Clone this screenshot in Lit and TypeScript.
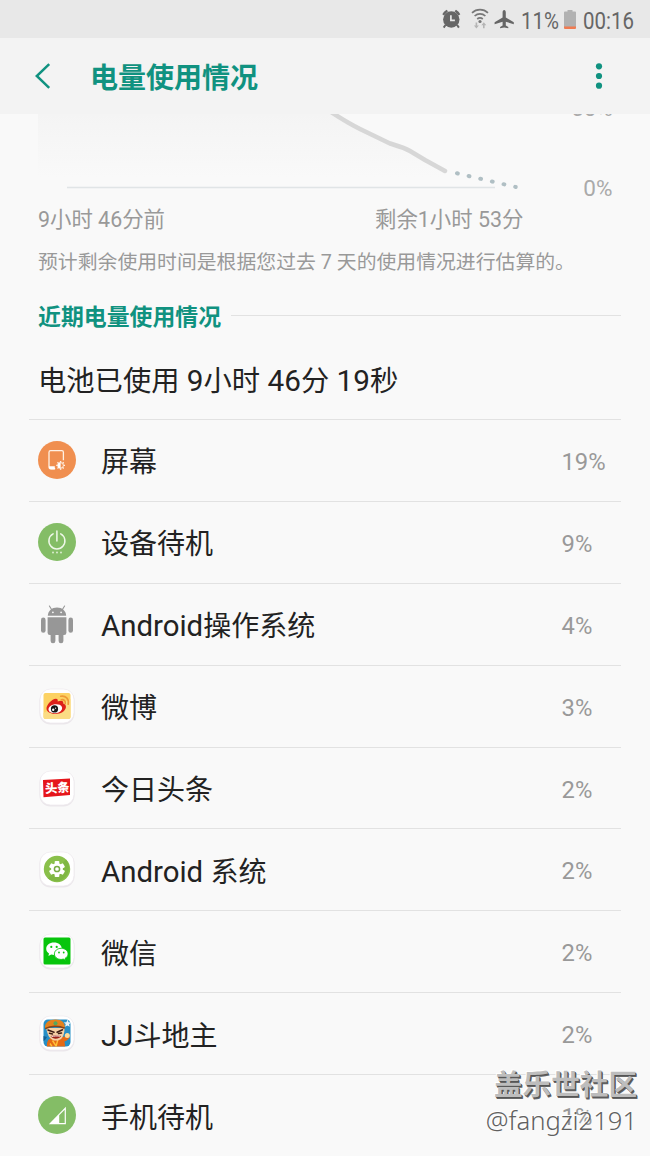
import { css, html, LitElement, svg } from 'lit'
import { customElement, property } from 'lit/decorators.js'

const tile = svg`
  <rect x='1.5' y='2.5' width='35' height='35' rx='11' fill='#ebe7eb'/>
  <rect x='2' y='2' width='34' height='34' rx='10.5' fill='#fff' stroke='#eeeaee' stroke-width='.7'/>
`

const gearTeeth = [0, 60, 120, 180, 240, 300]
const sunRays = [0, 45, 90, 135, 180, 225, 270, 315]

const icons: Record<string, unknown> = {
  screen: svg`
    <circle cx='19' cy='19' r='19' fill='#f08f50'/>
    <path d='M17.2 27.7H13a2 2 0 0 1-2-2V11.300a1.600 1.600 0 0 1 1.600-1.600h11.200a1.600 1.600 0 0 1 1.600 1.600v8' fill='none' stroke='#fff1e4' stroke-width='1.300'/>
    <path d='M11 25.300h5.800v3.100H13a2 2 0 0 1-2-2z' fill='#fff'/>
    ${sunRays.map(a => svg`<path d='M22.600 20v1.600' transform='rotate(${a} 22.600 24.400)' stroke='#fff1e4' stroke-width='1.400'/>`)}
    <circle cx='22.600' cy='24.400' r='2.800' fill='#f08f50' stroke='#fff1e4' stroke-width='1'/>
    <path d='M22.600 21.400a3 3 0 0 0 0 6z' fill='#fff'/>
  `,
  power: svg`
    <circle cx='19' cy='19' r='19' fill='#84bd66'/>
    <path d='M15.100 10.900a8 8 0 1 0 7.600 0M18.900 8v10' fill='none' stroke='#eef7e8' stroke-width='1.500' stroke-linecap='round'/>
    <g fill='#e3f1da'><circle cx='15' cy='29.500' r='.9'/><circle cx='19' cy='29.500' r='.9'/><circle cx='23' cy='29.500' r='.9'/></g>
  `,
  android: svg`
    <g fill='#979797'>
      <path d='M9.800 10.800c.3-5 4-8.200 9.200-8.200s8.900 3.200 9.200 8.200z'/>
      <path d='M9.600 12.300h18.800v15.500a2.300 2.300 0 0 1-2.300 2.300H11.900a2.300 2.300 0 0 1-2.300-2.300z'/>
      <rect x='3' y='12.600' width='4.600' height='15.200' rx='2.300'/>
      <rect x='30.400' y='12.600' width='4.600' height='15.200' rx='2.300'/>
      <rect x='12.600' y='26' width='4.800' height='12.300' rx='2.300'/>
      <rect x='20.600' y='26' width='4.800' height='12.300' rx='2.300'/>
    </g>
    <path d='M13.600 4.500 11.400 1M24.400 4.500 26.600 1' stroke='#979797' stroke-width='1.100' stroke-linecap='round'/>
    <circle cx='14.900' cy='7.300' r='.9' fill='#f9f9f9'/><circle cx='23.100' cy='7.300' r='.9' fill='#f9f9f9'/>
  `,
  weibo: svg`
    ${tile}
    <rect x='5.500' y='6' width='27' height='26' rx='2' fill='#fcd263'/>
    <path d='M5.500 26 32.500 12V30a2 2 0 0 1-2 2h-23a2 2 0 0 1-2-2z' fill='#fbdc84'/>
    <path d='M8.500 21.500c0-3.800 5.500-9.500 9.300-9.800 1.800-.1 2.300 1.200 1.800 2.700 3.500-1.300 6.400-1 5.600 2.200 2 .6 3 2 2.700 3.900-.6 3.700-5.300 6.500-10.400 6.500-5 0-9-2.300-9-5.500z' fill='#dd2019'/>
    <ellipse cx='17.300' cy='21.700' rx='6.900' ry='4.500' transform='rotate(-8 17.300 21.700)' fill='#fff'/>
    <circle cx='16.500' cy='21.900' r='3.600' fill='#161616'/>
    <circle cx='15.200' cy='22.700' r='1.200' fill='#fff'/><circle cx='17.600' cy='21.200' r='.6' fill='#fff'/>
    <path d='M23.300 12.700c2.800-.5 4.500 1.500 3.900 4M22.700 9.300c5-.9 8.600 2.500 7.500 8' fill='none' stroke='#ee9a35' stroke-width='1.600' stroke-linecap='round'/>
  `,
  toutiao: svg`
    ${tile}
    <path d='M5 11 32 9.500v16.600L5.500 28.200z' fill='#e5151b'/>
    <text x='7' y='23.400' class='logo-text' transform='rotate(-3 19 19)'>头条</text>
  `,
  gear: svg`
    ${tile}
    <circle cx='19' cy='19' r='13.200' fill='#8ac04b'/>
    <path d='M10 28.500 28 9.500A13.200 13.200 0 0 1 10 28.500z' fill='#7fb743'/>
    <g fill='#fff'>
      ${gearTeeth.map(a => svg`<rect x='16.700' y='11' width='4.600' height='4.500' rx='.8' transform='rotate(${a} 19 19)'/>`)}
      <circle cx='19' cy='19' r='5.900'/>
    </g>
    <circle cx='19' cy='19' r='2.600' fill='#fff' stroke='#78ac44' stroke-width='1.500'/>
  `,
  wechat: svg`
    ${tile}
    <rect x='5.500' y='5.500' width='27' height='27' rx='1.500' fill='#08c50d'/>
    <path d='M16 10.500c-4.400 0-7.800 2.700-7.800 6.200 0 2 1.100 3.700 2.800 4.800l-.6 2.500 2.800-1.500c5.500 1.600 10.600-1.500 10.600-5.800 0-3.500-3.400-6.200-7.800-6.200z' fill='#fff'/>
    <path d='M23.300 16.300c-3.900 0-6.900 2.500-6.900 5.600 0 3.900 4.500 6.500 8.900 5.200l2.400 1.300-.5-2.200c1.800-1 2.900-2.500 2.900-4.300 0-3.100-3-5.600-6.800-5.600z' fill='#fff' stroke='#08c50d' stroke-width='.9'/>
    <g fill='#08c50d'><circle cx='13.300' cy='14.900' r='1.100'/><circle cx='18.700' cy='14.900' r='1.100'/><circle cx='21' cy='20.500' r='.9'/><circle cx='25.700' cy='20.500' r='.9'/></g>
  `,
  landlord: svg`
    ${tile}
    <rect x='5.500' y='5.500' width='27' height='27' rx='4.500' fill='#278fc6'/>
    <path d='M5.500 22 9 23l-2 3-1.500 1z' fill='#165f91'/>
    <path d='M9 32.500c-.6-6.500 2.800-9.800 10-9.800 5 0 7.500 1.300 11-2.500l2 2.600c-2.200 3.700-4 4.200-5.500 4.800l.7 4.900z' fill='#e56a16'/>
    <path d='M14.500 26.500 18 32M20 25l-2 7.500M12 29.500l2 3' stroke='#ffc139' stroke-width='1.400'/>
    <path d='M8.200 14c1.600 9.500 5 12.600 9.800 12.600 5.500 0 8.400-4 8.600-12.600z' fill='#f6d0a4'/>
    <path d='M7 14.300C6.700 8.300 11 5.500 17.500 5.500c6.300 0 9.700 3.200 9.300 8.500-5.500-1.800-13.500-1.900-19.800.3z' fill='#e4821d'/>
    <path d='M7.200 14.600c5.500-3 13.600-3.200 19.500-.4' fill='none' stroke='#85431a' stroke-width='1.600'/>
    <circle cx='17.500' cy='9.300' r='2' fill='#54a85c'/>
    <path d='m10 16 6 2.200M24.500 15.700l-5.500 2.500M11.500 19.300l3 .6M20.500 19.600l3-.5' stroke='#3c1c15' stroke-width='1.500' stroke-linecap='round'/>
    <path d='M12.500 22.300c2.800-1 7.500-1.400 10.500-.4-1.500 3.200-7.800 4-10.500.4z' fill='#9b2018'/>
    <path d='M13.500 22.600c2.500-.7 6-.9 8.500-.4' stroke='#fff' stroke-width='.9' fill='none'/>
    <circle cx='29.300' cy='21.500' r='2.500' fill='#ffdc9a'/>
    <path d='m29.500 5.500 1 2.700 2.700.2-2.100 1.800.6 2.600-2.300-1.400-2.300 1.300.6-2.600-2-1.700 2.700-.2z' fill='#e9f3f8'/>
  `,
  signal: svg`
    <circle cx='19' cy='19' r='19' fill='#84bd66'/>
    <path d='M27.900 10.800v17.500H10.800z' fill='#fff'/>
    <path d='M21.200 19.300 26.700 13.700v13.300h-5.500z' fill='#84bd66'/>
  `,
}

const usage = [
  { icon: 'screen', name: '屏幕', percent: 19 },
  { icon: 'power', name: '设备待机', percent: 9 },
  { icon: 'android', name: 'Android操作系统', percent: 4 },
  { icon: 'weibo', name: '微博', percent: 3 },
  { icon: 'toutiao', name: '今日头条', percent: 2 },
  { icon: 'gear', name: 'Android 系统', percent: 2 },
  { icon: 'wechat', name: '微信', percent: 2 },
  { icon: 'landlord', name: 'JJ斗地主', percent: 2 },
  { icon: 'signal', name: '手机待机', percent: 1 },
]

// latin runs are set slightly larger than the chinese text around them
const mixed = (text: string) => text.split(/([\x20-\x7e]+)/).filter(Boolean).map(part =>
  /^[\x20-\x7e]/.test(part) ? html`<span class='latin'>${part}</span>` : part
)

const latinStyles = css`
    .latin {
        font-size: 1.05em;
        line-height: 1;
    }
`

@customElement('status-bar')
export class StatusBar extends LitElement {

  render () {
    return html`
      <svg class='icons' width='76' height='24' viewBox='0 0 76 24'>
        <g fill='#666'>
          <circle cx='9.300' cy='11.500' r='8.200'/>
          <path d='M.3 6.300A9 9 0 0 1 4.600 1.700L6 3.200 2 7.400zM18.300 6.300A9 9 0 0 0 14 1.700l-1.400 1.500 4 4.200z'/>
          <path d='m3.500 17-1.800 2.600M15.100 17l1.800 2.600' stroke='#666' stroke-width='2'/>
          <path d='M62.200 2c1 0 1.600 1 1.600 2.500v5l8 4.700v2l-8-2.400v3.700l2.500 1.600v1.200l-4.100-.8-4.100.8v-1.200l2.500-1.600v-3.700l-8 2.400v-2l8-4.700v-5C60.600 3 61.200 2 62.200 2z'/>
        </g>
        <path d='M8.900 7.300v5h4' fill='none' stroke='#e8e8e8' stroke-width='1.700'/>
        <g fill='none' stroke='#777' stroke-width='1.700'>
          <path d='M30 4.800c4.600-4.200 11.400-4.200 16 0M32.600 8c3.100-2.900 7.700-2.900 10.800 0M35.200 11c1.700-1.500 3.900-1.500 5.600 0'/>
        </g>
        <circle cx='38' cy='13.500' r='1.600' fill='#777'/>
        <path d='M35.200 14.500v3h1.700l-2.500 3-2.500-3h1.700v-3zM41 20.300v-3h-1.700l2.500-3 2.500 3h-1.700v3z' fill='#b5b5b5'/>
      </svg>
      <span class='charge'>11%</span>
      <svg class='battery' width='12' height='20' viewBox='0 0 12 20'>
        <path d='M1 1.500h2.500V0h5v1.500H11a1 1 0 0 1 1 1V17H0V2.500a1 1 0 0 1 1-1z' fill='#b1b1b1'/>
        <path d='M0 16.500h12V18a1 1 0 0 1-1 1H1a1 1 0 0 1-1-1z' fill='#f07b51'/>
      </svg>
      <span class='clock'>00:16</span>
    `
  }

  static get styles () {
    return [
      // language=CSS
      css`
          :host {
              display: flex;
              align-items: center;
              height: 38px;
              box-sizing: border-box;
              padding: 1px 0 0 442px;
              background: #e8e8e8;
              color: #666;
              font-size: 23.5px;
              line-height: 34px;
          }

          svg {
              flex: none;
          }

          .charge, .clock {
              flex: none;
              padding-top: 2px;
              transform: scaleX(0.87);
              transform-origin: left;
              white-space: nowrap;
          }

          .charge {
              width: 42px;
              margin-left: 3px;
          }

          .battery {
              margin-left: 1px;
          }

          .clock {
              margin-left: 7px;
          }
      `,
    ];
  }
}

@customElement('battery-chart')
export class BatteryChart extends LitElement {

  render () {
    return html`
      <svg width='650' height='88' viewBox='0 0 650 88'>
        <defs>
          <linearGradient id='shade' x1='0' y1='0' x2='0' y2='1'>
            <stop offset='0' stop-color='#f4f4f4'/>
            <stop offset='1' stop-color='#f9f9f9'/>
          </linearGradient>
        </defs>
        <path d='M38 0H333L390 29 410 36 446 57V63H38z' fill='url(#shade)'/>
        <path d='M67 73.500H495' stroke='#e0e4e6' stroke-width='1.600'/>
        <path d='M328-4 C340 4 350 10 360 15L390 29.500C398 32 405 34 410 37L425 46 445 57' fill='none' stroke='#d7d7d7' stroke-width='4.500' stroke-linecap='round' stroke-linejoin='round'/>
        <path d='M457 59.300 515.700 73' fill='none' stroke='#b0bfc4' stroke-width='4' stroke-linecap='round' stroke-dasharray='.8 11.150'/>
        <text x='571' y='1.500'>50%</text>
        <text x='583.300' y='82'>0%</text>
      </svg>
      <div class='range'>
        <span class='since'>9小时 46分前</span>
        <span>剩余1小时 53分</span>
      </div>
    `
  }

  static get styles () {
    return [
      // language=CSS
      css`
          :host {
              display: block;
              height: 131px;
              color: #999;
          }

          svg {
              display: block;
          }

          text {
              font-size: 22.5px;
              fill: #aaa;
          }

          .range {
              display: flex;
              padding-left: 38px;
              font-size: 21.4px;
              line-height: 36px;
              white-space: nowrap;
          }

          .since {
              width: 337px;
          }
      `,
    ];
  }
}

@customElement('usage-row')
export class UsageRow extends LitElement {

  @property() icon = ''
  @property() name = ''
  @property({ type: Number }) percent = 0

  render () {
    return html`
      <svg class='icon' width='38' height='39' viewBox='0 0 38 39'>${icons[this.icon]}</svg>
      <span class='name'>${mixed(this.name)}</span>
      <span class='percent'>${this.percent}%</span>
    `
  }

  static get styles () {
    return [
      latinStyles,
      // language=CSS
      css`
          :host {
              display: flex;
              align-items: center;
              box-sizing: border-box;
              height: 81.9px;
              margin: 0 29px;
              padding-left: 9px;
              border-top: 1px solid #e2e2e2;
          }

          .icon {
              flex: none;
          }

          .name {
              flex: 1;
              margin-left: 25px;
              padding-top: 6px;
              color: #222;
              font-size: 28px;
              line-height: 40px;
              white-space: nowrap;
          }

          .percent {
              width: 59.5px;
              padding-top: 3px;
              color: #999;
              font-size: 23.8px;
          }

          .logo-text {
              font-size: 12.3px;
              font-weight: 900;
              fill: #fff;
          }
      `,
    ];
  }
}

@customElement('app-root')
export class AppRoot extends LitElement {

  render () {
    return html`
      <status-bar></status-bar>
      <header class='header'>
        <svg width='16' height='26' viewBox='0 0 16 26'>
          <path d='M14.200 1.200 1.800 13l12.400 11.800' fill='none' stroke='#109280' stroke-width='2.500'/>
        </svg>
        <span class='title'>电量使用情况</span>
        <svg width='8' height='28' viewBox='0 0 8 28'>
          <g fill='#109280'><circle cx='4' cy='4.300' r='3.100'/><circle cx='4' cy='14' r='3.100'/><circle cx='4' cy='23.700' r='3.100'/></g>
        </svg>
      </header>
      <battery-chart></battery-chart>
      <p class='note'>预计剩余使用时间是根据您过去 7 天的使用情况进行估算的。</p>
      <h2 class='section'>近期电量使用情况</h2>
      <div class='total'>${mixed('电池已使用 9小时 46分 19秒')}</div>
      ${usage.map(item => html`
        <usage-row .icon=${item.icon} .name=${item.name} .percent=${item.percent}></usage-row>
      `)}
      <div class='watermark'>
        <div class='community'>盖乐世社区</div>
        <div class='author'>@fangzi2191</div>
      </div>
    `
  }

  static get styles () {
    return [
      latinStyles,
      // language=CSS
      css`
          :host {
              display: block;
              position: relative;
              width: 650px;
              height: 1156px;
              overflow: hidden;
              background: #f9f9f9;
              font-family: Roboto, 'Noto Sans CJK SC', sans-serif;
          }

          .header {
              display: flex;
              align-items: center;
              box-sizing: border-box;
              height: 76px;
              padding: 0 47px 0 35px;
              background: #f3f3f3;
          }

          .title {
              flex: 1;
              margin-left: 39px;
              color: #109280;
              font-size: 28px;
              font-weight: 700;
          }

          .note {
              margin: 0;
              padding-left: 38px;
              color: #999;
              font-size: 19.85px;
              line-height: 36px;
              white-space: nowrap;
          }

          .section {
              display: flex;
              align-items: center;
              height: 68px;
              margin: 0 29px 0 38px;
              color: #109280;
              font-size: 22.9px;
              font-weight: 700;
              white-space: nowrap;
          }

          .section::after {
              content: '';
              flex: 1;
              height: 1px;
              margin-left: 10px;
              background: #e2e2e2;
          }

          .total {
              height: 70px;
              padding-left: 38px;
              color: #222;
              font-size: 28.3px;
              line-height: 65px;
              white-space: nowrap;
          }

          .watermark {
              position: absolute;
              right: 13px;
              bottom: 18px;
              text-align: right;
              white-space: nowrap;
          }

          .community {
              color: #bdbdbd;
              font-size: 28.6px;
              font-weight: 700;
              line-height: 38px;
              text-shadow: 1px 1px 0 #555, 1.5px 1.5px 0 #666, -1px -1px 0 #fff;
          }

          .author {
              color: #606060;
              font-family: 'Noto Sans', sans-serif;
              font-size: 25.6px;
              font-weight: 300;
              line-height: 34px;
              text-shadow: -1px -1px 0 #fff;
          }
      `,
    ];
  }
}
